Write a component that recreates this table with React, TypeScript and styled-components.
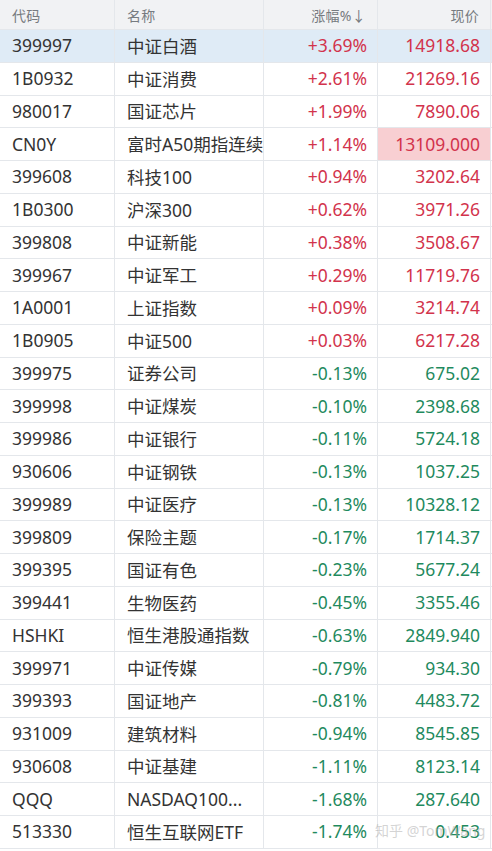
import React from "react";
import styled, { createGlobalStyle } from "styled-components";

type Quote = {
  code: string;
  name: string;
  change: string;
  price: string;
  flash?: boolean;
};

const quotes: Quote[] = [
  { code: "399997", name: "中证白酒", change: "+3.69%", price: "14918.68" },
  { code: "1B0932", name: "中证消费", change: "+2.61%", price: "21269.16" },
  { code: "980017", name: "国证芯片", change: "+1.99%", price: "7890.06" },
  { code: "CN0Y", name: "富时A50期指连续", change: "+1.14%", price: "13109.000", flash: true },
  { code: "399608", name: "科技100", change: "+0.94%", price: "3202.64" },
  { code: "1B0300", name: "沪深300", change: "+0.62%", price: "3971.26" },
  { code: "399808", name: "中证新能", change: "+0.38%", price: "3508.67" },
  { code: "399967", name: "中证军工", change: "+0.29%", price: "11719.76" },
  { code: "1A0001", name: "上证指数", change: "+0.09%", price: "3214.74" },
  { code: "1B0905", name: "中证500", change: "+0.03%", price: "6217.28" },
  { code: "399975", name: "证券公司", change: "-0.13%", price: "675.02" },
  { code: "399998", name: "中证煤炭", change: "-0.10%", price: "2398.68" },
  { code: "399986", name: "中证银行", change: "-0.11%", price: "5724.18" },
  { code: "930606", name: "中证钢铁", change: "-0.13%", price: "1037.25" },
  { code: "399989", name: "中证医疗", change: "-0.13%", price: "10328.12" },
  { code: "399809", name: "保险主题", change: "-0.17%", price: "1714.37" },
  { code: "399395", name: "国证有色", change: "-0.23%", price: "5677.24" },
  { code: "399441", name: "生物医药", change: "-0.45%", price: "3355.46" },
  { code: "HSHKI", name: "恒生港股通指数", change: "-0.63%", price: "2849.940" },
  { code: "399971", name: "中证传媒", change: "-0.79%", price: "934.30" },
  { code: "399393", name: "国证地产", change: "-0.81%", price: "4483.72" },
  { code: "931009", name: "建筑材料", change: "-0.94%", price: "8545.85" },
  { code: "930608", name: "中证基建", change: "-1.11%", price: "8123.14" },
  { code: "QQQ", name: "NASDAQ100...", change: "-1.68%", price: "287.640" },
  { code: "513330", name: "恒生互联网ETF", change: "-1.74%", price: "0.453" },
];

const red = "#d2334c";
const green = "#1f8a5e";
const line = "#e4e7eb";

const GlobalStyle = createGlobalStyle`
  body {
    margin: 0;
    background: #ffffff;
    font-family: "Noto Sans", "Noto Sans CJK SC", sans-serif;
  }
`;

export default function App() {
  return (
    <>
      <GlobalStyle />
      <Board>
        <HeaderRow>
          <HeadCell>代码</HeadCell>
          <HeadCell>名称</HeadCell>
          <HeadCell align="right">涨幅%↓</HeadCell>
          <HeadCell align="right">现价</HeadCell>
        </HeaderRow>
        {quotes.map((q, i) => {
          const up = q.change.startsWith("+");
          return (
            <Row key={q.code} selected={i === 0}>
              <Cell>{q.code}</Cell>
              <Cell>{q.name}</Cell>
              <Cell align="right" color={up ? red : green}>
                {q.change}
              </Cell>
              <Cell align="right" color={up ? red : green} flash={q.flash}>
                {q.price}
              </Cell>
            </Row>
          );
        })}
        <Watermark>知乎 @TomWang</Watermark>
      </Board>
    </>
  );
}

const Board = styled.div`
  position: relative;
  width: 492px;
  height: 851px;
  overflow: hidden;
  background: #ffffff;
`;

const columns = "115px 149px 114px 113px";

const HeaderRow = styled.div`
  display: grid;
  grid-template-columns: ${columns};
  height: 30px;
  background: #f1f2f4;
  border-bottom: 1px solid ${line};
  box-sizing: border-box;
`;

const HeadCell = styled.div<{ align?: string }>`
  display: flex;
  align-items: center;
  justify-content: ${({ align }) => (align === "right" ? "flex-end" : "flex-start")};
  padding: 0 11px 0 12px;
  border-right: 1px solid ${line};
  font-size: 14px;
  letter-spacing: 0.3px;
  color: #777b80;
`;

const Row = styled.div<{ selected?: boolean }>`
  display: grid;
  grid-template-columns: ${columns};
  height: 32.75px;
  box-sizing: border-box;
  border-bottom: 1px solid ${line};
  background: ${({ selected }) => (selected ? "#dfebf6" : "#ffffff")};
`;

const Cell = styled.div<{ align?: string; color?: string; flash?: boolean }>`
  display: flex;
  align-items: center;
  justify-content: ${({ align }) => (align === "right" ? "flex-end" : "flex-start")};
  padding: 0 10px 1px 12px;
  border-right: 1px solid ${line};
  font-size: 17.5px;
  white-space: nowrap;
  overflow: hidden;
  color: ${({ color }) => color || "#333"};
  background: ${({ flash }) => (flash ? "#f8cfd2" : "transparent")};
`;

const Watermark = styled.div`
  position: absolute;
  left: 375px;
  top: 820px;
  font-size: 14px;
  color: rgba(170, 170, 170, 0.5);
  white-space: nowrap;
  pointer-events: none;
`;
